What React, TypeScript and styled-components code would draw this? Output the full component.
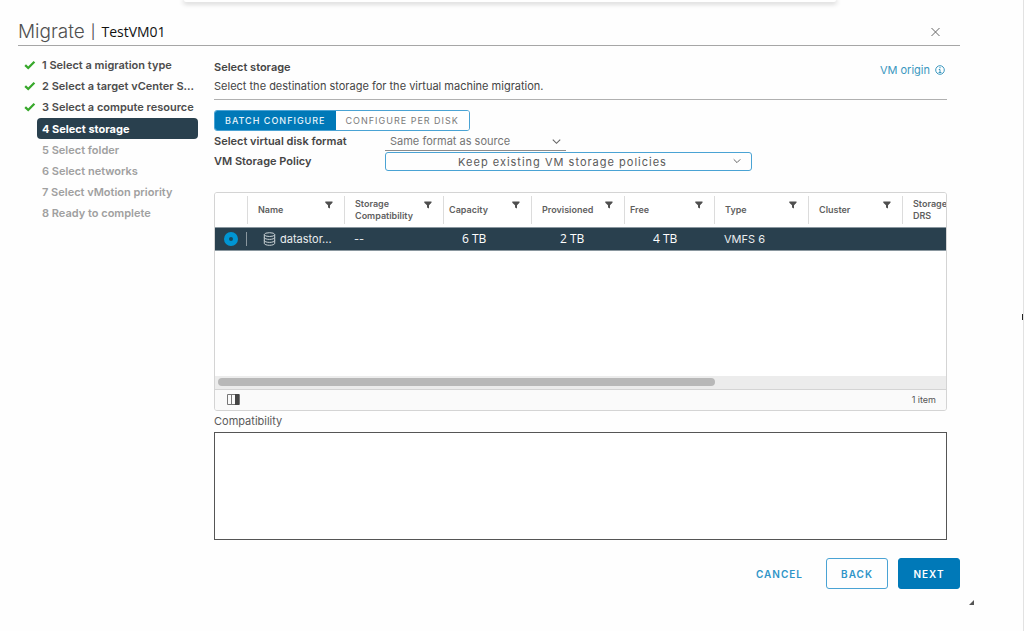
import React, { useState } from "react";
import styled, { createGlobalStyle } from "styled-components";

const GlobalStyle = createGlobalStyle`
  *, *::before, *::after { box-sizing: border-box; }
  body {
    margin: 0;
    background: #fefefe;
    color: #454545;
    font-family: Inter, "Liberation Sans", sans-serif;
    font-size: 11px;
    line-height: 18px;
  }
  h1, h2, p, ol { margin: 0; padding: 0; }
  button, select, input { font: inherit; margin: 0; }
`;

const Page = styled.div`
  position: relative;
  min-height: 100vh;
  border-right: 1px solid #e2e2e2;
  overflow: hidden;
`;

const TopCard = styled.div`
  height: 2px;
  margin: 0 187px 0 184px;
  border-radius: 0 0 4px 4px;
  background: #fff;
  box-shadow: 0 1px 5px 1px #d0d0d0;
`;

const EdgeMark = styled.span`
  position: absolute;
  right: -1px;
  top: 314px;
  width: 2px;
  height: 6px;
  background: #222;
`;

const Dialog = styled.main`
  margin: 16px 63px 0 18px;
`;

const Header = styled.header`
  display: flex;
  align-items: center;
  justify-content: space-between;
  height: 28px;
  padding-right: 19px;
  border-bottom: 1px solid #a6a6a6;
`;

const Title = styled.h1`
  display: flex;
  align-items: center;
  gap: 6px;
  font-size: 19px;
  font-weight: 300;
  line-height: 26px;
  color: #505050;
`;

const TitleDivider = styled.span`
  font-size: 14px;
  font-weight: 400;
`;

const VmName = styled.span`
  font-family: "Open Sans", sans-serif;
  font-size: 14px;
  font-weight: 400;
  color: #111;
`;

const IconButton = styled.button`
  display: flex;
  padding: 0;
  border: 0;
  background: none;
  color: #666;
`;

const Body = styled.div`
  display: flex;
`;

const Steps = styled.ol`
  flex: 0 0 196px;
  padding: 8px 16px 0 0;
  list-style: none;
`;

const Step = styled.li`
  display: grid;
  grid-template-columns: 19px 1fr;
  align-items: center;
`;

const StepLabel = styled.button<{ $state: "done" | "active" | "todo" }>`
  height: 21px;
  margin-top: ${(p) => (p.$state === "active" ? "1px" : "0")};
  padding: 0 0 0 5px;
  border: 0;
  border-radius: 4px;
  text-align: left;
  white-space: nowrap;
  font-weight: ${(p) => (p.$state === "active" ? 700 : 600)};
  background: ${(p) => (p.$state === "active" ? "#29404e" : "none")};
  color: ${(p) =>
    p.$state === "active" ? "#fff" : p.$state === "done" ? "#4c4c4c" : "#a0a0a0"};
`;

const TickCell = styled.span`
  display: flex;
  padding-left: 6px;
`;

const Content = styled.section`
  flex: 1;
  min-width: 0;
  padding: 12px 13px 0 0;
`;

const Intro = styled.div`
  display: flex;
  justify-content: space-between;
  padding-bottom: 4px;
  border-bottom: 1px solid #b0b0b0;
`;

const SectionTitle = styled.h2`
  font-size: 11px;
  font-weight: 600;
  line-height: 19px;
`;

const Description = styled.p`
  line-height: 18px;
`;

const OriginLink = styled.a`
  display: flex;
  align-items: center;
  align-self: flex-start;
  gap: 5px;
  padding: 3px 2px 0 0;
  color: #3a97bf;
  text-decoration: none;
`;

const Toggle = styled.div`
  display: flex;
  width: fit-content;
  height: 21px;
  margin-top: 10px;
  border: 1px solid #4aa3d4;
  border-radius: 3px;
  overflow: hidden;
`;

const ToggleButton = styled.button<{ $on: boolean }>`
  padding: 0 10px;
  border: 0;
  font-size: 9px;
  font-weight: ${(p) => (p.$on ? 500 : 400)};
  letter-spacing: 1px;
  line-height: 19px;
  background: ${(p) => (p.$on ? "#0079b8" : "#fff")};
  color: ${(p) => (p.$on ? "#e6f3fa" : "#7b7b7b")};
`;

const Field = styled.div`
  display: grid;
  grid-template-columns: 171px 1fr;
  align-items: center;
  min-height: 20px;
`;

const FieldLabel = styled.label`
  font-weight: 600;
`;

const SelectWrap = styled.div<{ $width: number }>`
  display: grid;
  align-items: center;
  width: ${(p) => p.$width}px;
  & > * { grid-area: 1 / 1; }
`;

const Chevron = styled.svg<{ $inset: number }>`
  justify-self: end;
  margin-right: ${(p) => p.$inset}px;
  pointer-events: none;
`;

const FormatSelect = styled.select`
  appearance: none;
  width: 100%;
  height: 20px;
  padding: 0 5px;
  border: 0;
  border-bottom: 1px solid #8c8c8c;
  border-radius: 0;
  background: transparent;
  color: #757575;
`;

const PolicySelect = styled.select`
  appearance: none;
  width: 100%;
  height: 19px;
  padding: 0 12px 0 0;
  border: 1px solid #4aa3d4;
  border-radius: 3px;
  background: transparent;
  color: #5a5a5a;
  letter-spacing: 1px;
  text-align: center;
  text-align-last: center;
`;

const Grid = styled.div`
  margin-top: 21px;
  border: 1px solid #d4d4d4;
  border-radius: 3px;
  overflow: hidden;
`;

const GridView = styled.div`
  min-height: 183px;
  overflow: hidden;
  background: #fff;
`;

const Table = styled.table`
  width: 781px;
  table-layout: fixed;
  border-collapse: collapse;
`;

const HeadCell = styled.th<{ $width: number; $pad?: number }>`
  width: ${(p) => p.$width}px;
  height: 34px;
  padding: 0;
  text-align: left;
  font-size: 9px;
  font-weight: 600;
  line-height: 12px;
  color: #5f5f5f;

  & > div {
    display: flex;
    align-items: center;
    justify-content: space-between;
    height: 28px;
    padding: 0 11px 0 ${(p) => p.$pad ?? 10}px;
    border-left: 1px solid #dcdcdc;
  }
  &:first-child > div { border-left: 0; }
  svg { flex: none; margin-bottom: 10px; }
`;

const Row = styled.tr`
  height: 23px;
  background: #29404e;
  border-top: 1px solid #8a979f;
  border-bottom: 1px solid #8a979f;
  color: #e9edef;
`;

const Cell = styled.td<{ $pad?: number }>`
  padding: 0 0 0 ${(p) => p.$pad ?? 10}px;
  white-space: nowrap;
`;

const SizeCell = styled(Cell)`
  font-family: "Open Sans", sans-serif;
  font-size: 12px;
  color: #fff;
`;

const RadioBox = styled.div`
  display: flex;
  align-items: center;
  justify-content: space-between;
  border-right: 1px solid #8a979f;
  height: 14px;
  padding-right: 8px;
`;

const Radio = styled.input`
  appearance: none;
  width: 14px;
  height: 14px;
  border: 5px solid #0095d3;
  border-radius: 50%;
  background: #17495f;
`;

const NameBox = styled.div`
  display: flex;
  align-items: center;
  gap: 4px;
`;

const ScrollTrack = styled.div`
  height: 13px;
  padding: 2px 3px;
  background: #ececec;
`;

const ScrollThumb = styled.div`
  width: 68.5%;
  height: 8px;
  border-radius: 4px;
  background: #b8b8b8;
`;

const GridFooter = styled.div`
  display: flex;
  align-items: center;
  justify-content: space-between;
  height: 21px;
  padding: 0 10px 1px 12px;
  border-top: 1px solid #d4d4d4;
  background: #fafafa;
  font-size: 9px;
  color: #555;
`;

const CompatTitle = styled.h2`
  padding: 1px 0 2px;
  font-size: 11px;
  font-weight: 400;
  color: #5a5a5a;
`;

const CompatBox = styled.div`
  min-height: 108px;
  border: 1px solid #555;
  background: #fff;
`;

const Actions = styled.footer`
  display: flex;
  justify-content: flex-end;
  gap: 10px;
  margin-top: 18px;
`;

const ActionButton = styled.button<{ $kind: "link" | "outline" | "solid" }>`
  min-width: 62px;
  height: 31px;
  padding: 0 12px;
  border: 1px solid
    ${(p) => (p.$kind === "link" ? "transparent" : p.$kind === "solid" ? "#0079b8" : "#4aa3d4")};
  border-radius: 3px;
  font-size: 10px;
  font-weight: 600;
  letter-spacing: 1px;
  background: ${(p) => (p.$kind === "solid" ? "#0079b8" : "transparent")};
  color: ${(p) => (p.$kind === "solid" ? "#fff" : "#2f95c8")};
`;

const ResizeRow = styled.div`
  display: flex;
  justify-content: flex-end;
  margin: 11px 49px 0 0;
`;

const Tick = () => (
  <svg width="12" height="10" viewBox="0 0 12 10" aria-hidden="true">
    <path d="M1.2 5.2 4.2 8 10.4 1.8" fill="none" stroke="#37a82b" strokeWidth="2.3" />
  </svg>
);

const Funnel = () => (
  <svg width="8" height="8" viewBox="0 0 8 8" aria-hidden="true">
    <path d="M0.3 0.5h7.2v1.3L5 4.3v3.2L3 6.5V4.3L0.3 1.8z" fill="#4f4f4f" />
  </svg>
);

const Datastore = () => (
  <svg width="13" height="14" viewBox="0 0 13 14" fill="none" stroke="#c9d1d5" aria-hidden="true">
    <ellipse cx="6.5" cy="2.6" rx="5.2" ry="1.9" />
    <path d="M1.3 2.6v8.8c0 1 2.3 1.9 5.2 1.9s5.2-.9 5.2-1.9V2.6M1.3 5.5c0 1 2.3 1.9 5.2 1.9s5.2-.9 5.2-1.9M1.3 8.5c0 1 2.3 1.9 5.2 1.9s5.2-.9 5.2-1.9" />
  </svg>
);

const ChevronIcon = ({ inset, size }: { inset: number; size: number }) => (
  <Chevron $inset={inset} width={size} height={size} viewBox="0 0 8 8" aria-hidden="true">
    <path d="M0.7 2.3 4 5.6 7.3 2.3" fill="none" stroke="#666" />
  </Chevron>
);

const steps = [
  "1 Select a migration type",
  "2 Select a target vCenter S...",
  "3 Select a compute resource",
  "4 Select storage",
  "5 Select folder",
  "6 Select networks",
  "7 Select vMotion priority",
  "8 Ready to complete",
];
const current = 3;

const columns: { label: React.ReactNode; width: number; pad?: number }[] = [
  { label: "Name", width: 97 },
  { label: <>Storage<br />Compatibility</>, width: 99 },
  { label: "Capacity", width: 88, pad: 5 },
  { label: "Provisioned", width: 93 },
  { label: "Free", width: 90, pad: 5 },
  { label: "Type", width: 94 },
  { label: "Cluster", width: 94 },
  { label: <>Storage<br />DRS</>, width: 94 },
];

export default function App() {
  const [mode, setMode] = useState("batch");
  return (
    <Page>
      <GlobalStyle />
      <TopCard />
      <EdgeMark />
      <Dialog>
        <Header>
          <Title>
            Migrate <TitleDivider>|</TitleDivider> <VmName>TestVM01</VmName>
          </Title>
          <IconButton aria-label="Close">
            <svg width="11" height="11" viewBox="0 0 11 11" aria-hidden="true">
              <path d="M1.5 2l8 8M9.5 2l-8 8" stroke="currentColor" />
            </svg>
          </IconButton>
        </Header>
        <Body>
          <Steps>
            {steps.map((label, i) => (
              <Step key={label}>
                <TickCell>{i < current && <Tick />}</TickCell>
                <StepLabel $state={i < current ? "done" : i === current ? "active" : "todo"}>
                  {label}
                </StepLabel>
              </Step>
            ))}
          </Steps>
          <Content>
            <Intro>
              <div>
                <SectionTitle>Select storage</SectionTitle>
                <Description>
                  Select the destination storage for the virtual machine migration.
                </Description>
              </div>
              <OriginLink href="#origin">
                VM origin
                <svg width="10" height="10" viewBox="0 0 10 10" fill="none" stroke="currentColor" aria-hidden="true">
                  <circle cx="5" cy="5" r="4.3" />
                  <path d="M5 2v1.3M3.8 4.5H5v3M3.6 7.5h2.8" />
                </svg>
              </OriginLink>
            </Intro>
            <Toggle>
              <ToggleButton $on={mode === "batch"} onClick={() => setMode("batch")}>
                BATCH CONFIGURE
              </ToggleButton>
              <ToggleButton $on={mode === "disk"} onClick={() => setMode("disk")}>
                CONFIGURE PER DISK
              </ToggleButton>
            </Toggle>
            <Field>
              <FieldLabel htmlFor="format">Select virtual disk format</FieldLabel>
              <SelectWrap $width={181}>
                <FormatSelect id="format">
                  <option>Same format as source</option>
                </FormatSelect>
                <ChevronIcon inset={5} size={9} />
              </SelectWrap>
            </Field>
            <Field>
              <FieldLabel htmlFor="policy">VM Storage Policy</FieldLabel>
              <SelectWrap $width={367}>
                <PolicySelect id="policy">
                  <option>Keep existing VM storage policies</option>
                </PolicySelect>
                <ChevronIcon inset={11} size={8} />
              </SelectWrap>
            </Field>
            <Grid>
              <GridView>
                <Table>
                  <thead>
                    <tr>
                      <HeadCell $width={32}>
                        <div />
                      </HeadCell>
                      {columns.map((c, i) => (
                        <HeadCell key={i} $width={c.width} $pad={c.pad}>
                          <div>
                            <span>{c.label}</span>
                            <Funnel />
                          </div>
                        </HeadCell>
                      ))}
                    </tr>
                  </thead>
                  <tbody>
                    <Row>
                      <Cell $pad={9}>
                        <RadioBox>
                          <Radio type="radio" name="datastore" aria-label="datastore" defaultChecked />
                        </RadioBox>
                      </Cell>
                      <Cell $pad={16}>
                        <NameBox>
                          <Datastore />
                          datastor...
                        </NameBox>
                      </Cell>
                      <Cell>--</Cell>
                      <SizeCell $pad={19}>6 TB</SizeCell>
                      <SizeCell $pad={29}>2 TB</SizeCell>
                      <SizeCell $pad={29}>4 TB</SizeCell>
                      <Cell>VMFS 6</Cell>
                      <Cell />
                      <Cell />
                    </Row>
                  </tbody>
                </Table>
              </GridView>
              <ScrollTrack>
                <ScrollThumb />
              </ScrollTrack>
              <GridFooter>
                <IconButton aria-label="Show columns">
                  <svg width="13" height="11" viewBox="0 0 13 11" aria-hidden="true">
                    <path d="M.5.5h12v10H.5zM4.5.5v10" fill="none" stroke="#777" />
                    <path d="M8 0h4v11H8z" fill="#444" />
                  </svg>
                </IconButton>
                <span>1 item</span>
              </GridFooter>
            </Grid>
            <CompatTitle>Compatibility</CompatTitle>
            <CompatBox />
          </Content>
        </Body>
        <Actions>
          <ActionButton $kind="link">CANCEL</ActionButton>
          <ActionButton $kind="outline">BACK</ActionButton>
          <ActionButton $kind="solid">NEXT</ActionButton>
        </Actions>
      </Dialog>
      <ResizeRow>
        <svg width="5" height="5" viewBox="0 0 5 5" aria-hidden="true">
          <path d="M5 0v5H0z" fill="#555" />
        </svg>
      </ResizeRow>
    </Page>
  );
}
